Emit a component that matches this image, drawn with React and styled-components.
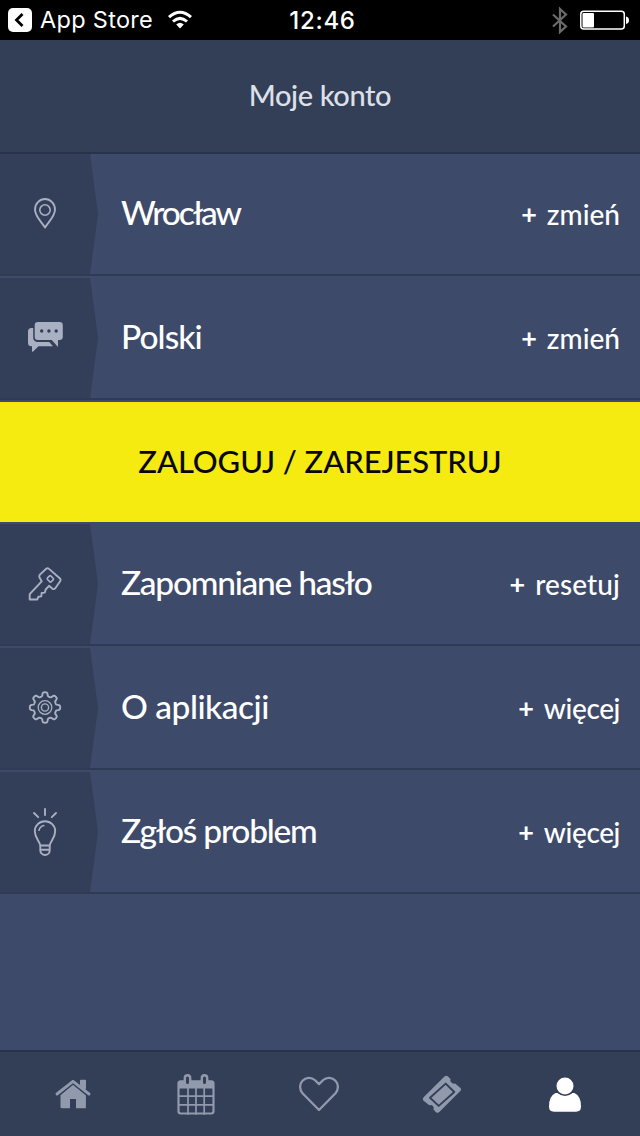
import React from "react";
import styled, { createGlobalStyle } from "styled-components";

const GlobalStyle = createGlobalStyle`
  * { box-sizing: border-box; }
  body { margin: 0; background: #3e4a69; }
`;

const Screen = styled.div`
  display: flex;
  flex-direction: column;
  width: 640px;
  height: 1136px;
  overflow: hidden;
  background: #3e4a69;
  color: #fff;
  font-family: Lato, "Liberation Sans", sans-serif;
  font-weight: 500;
`;

const StatusBar = styled.div`
  display: grid;
  grid-template-columns: 1fr auto 1fr;
  align-items: center;
  height: 40px;
  padding: 0 11px 0 8px;
  background: #000;
  font-family: Inter, "Liberation Sans", sans-serif;
  font-size: 23.5px;
  line-height: 40px;
`;

const StatusLeft = styled.div`
  display: flex;
  align-items: center;
  font-weight: 400;
  letter-spacing: 0.3px;
`;

const StatusName = styled.span`
  margin: 0 15px 0 8px;
`;

const StatusTime = styled.div`
  font-weight: 500;
  font-size: 24px;
  letter-spacing: 0.7px;
  margin-left: 8px;
  padding-top: 2px;
  line-height: 38px;
`;

const StatusRight = styled.div`
  display: flex;
  align-items: center;
  justify-content: flex-end;
  gap: 12px;
`;

const Header = styled.header`
  display: flex;
  align-items: center;
  justify-content: center;
  height: 114px;
  padding-bottom: 2px;
  border-bottom: 2px solid #28334b;
  background: #333e57;
  color: #dde0e8;
`;

const Label = styled.span`
  font-size: ${(p) => p.$size}px;
  font-weight: ${(p) => (p.$bold ? 700 : 500)};
  letter-spacing: ${(p) => p.$track || 0}px;
  line-height: 40px;
  white-space: nowrap;
`;

const Row = styled.div`
  display: flex;
  align-items: stretch;
  height: ${(p) => (p.$first ? 122 : 124)}px;
  padding-top: ${(p) => (p.$first ? 0 : 2)}px;
  border-bottom: 2px solid #2f3a55;
`;

const IconPanel = styled.div`
  display: flex;
  align-items: center;
  width: 98px;
  background: #333e59;
  color: #a9b0c2;
  clip-path: polygon(0 0, 90px 0, 98px 50%, 90px 100%, 0 100%);
  svg { display: block; }
`;

const RowBody = styled.div`
  flex: 1;
  display: flex;
  align-items: center;
  justify-content: space-between;
  padding: 0 20px 4px 23px;
`;

const Action = styled.div`
  display: flex;
  align-items: center;
  gap: 10px;
  padding-top: 3px;
`;

const LoginButton = styled.button`
  flex: none;
  height: 120px;
  margin-top: 2px;
  padding: 0 0 3px;
  border: 0;
  background: #f5eb11;
  color: #080800;
  font: inherit;
`;

const TabBar = styled.nav`
  display: grid;
  grid-template-columns: repeat(5, 123px);
  justify-content: center;
  height: 86px;
  margin-top: auto;
  padding-right: 2px;
  border-top: 2px solid #28334b;
  background: #333e57;
`;

const Tab = styled.a`
  display: flex;
  align-items: center;
  justify-content: center;
  color: ${(p) => (p.$active ? "#fff" : "#9199ad")};
  svg { display: block; }
`;

const Pic = ({ w = 90, h = 120, children }) => (
  <svg width={w} height={h} viewBox={`0 0 ${w} ${h}`} fill="none" stroke="currentColor"
    strokeWidth="1.9" strokeLinecap="round" strokeLinejoin="round">{children}</svg>
);

const PinIcon = () => (
  <Pic>
    <path d="M45 73.500C42 68.500 35 62.500 35 55.500a10 10.500 0 0 1 20 0C55 62.500 48 68.500 45 73.500Z" />
    <circle cx="45" cy="56" r="5.200" strokeWidth="1.600" />
  </Pic>
);

const ChatIcon = () => (
  <Pic>
    <path d="M38 44h21.500a3.300 3.300 0 0 1 3.300 3.300v11.500a3.300 3.300 0 0 1-3.300 3.300H58v6.800l-6.300-6.800H38a3.300 3.300 0 0 1-3.300-3.300V47.300a3.300 3.300 0 0 1 3.300-3.300Z" fill="currentColor" stroke="none" />
    <path d="M33.200 50H31.500a3.500 3.500 0 0 0-3.500 3.500v11.300a3.500 3.500 0 0 0 3.500 3.500h.5v4.500q0 1.500 1.200.7L38.500 68.300H53l-3.800-4.200H37.500a4.300 4.300 0 0 1-4.300-4.300Z" fill="currentColor" stroke="none" />
    <g fill="#333e59" stroke="none">
      <circle cx="41.700" cy="53" r="1.700" /><circle cx="48.900" cy="53" r="1.700" /><circle cx="56.200" cy="53" r="1.700" />
    </g>
  </Pic>
);

const KeyIcon = () => (
  <Pic>
    <path d="M46.500 44.500q1.300-.7 2.500.4L60 54.500q1.200 1.200.3 2.500l-5 7.200q-1.200 1.500-2.800.6l-3.500-3-3.300 3.700-.9 3.100-3.200.4-.3 3.400-3 .4-1 2.700H29.700v-5.300L41.700 57.300 39.500 53.600q-.8-1.600.4-3Z" />
    <rect x="47.600" y="52.400" width="5.400" height="4.900" rx="1.200" transform="rotate(45 50.300 54.900)" strokeWidth="1.600" />
  </Pic>
);

const gearPath = (() => {
  const steps = 160;
  const points = [];
  for (let i = 0; i < steps; i++) {
    const a = (i / steps) * Math.PI * 2;
    const r = 13.3 + 1.95 * Math.tanh(2.2 * Math.cos(8 * a));
    points.push(`${(45 + r * Math.sin(a)).toFixed(2)} ${(59.5 - r * Math.cos(a)).toFixed(2)}`);
  }
  return `M${points.join("L")}Z`;
})();

const GearIcon = () => (
  <Pic>
    <path d={gearPath} />
    <circle cx="45" cy="59.500" r="6.800" strokeWidth="1.300" />
    <circle cx="45" cy="59.500" r="3.600" strokeWidth="1.400" />
  </Pic>
);

const BulbIcon = () => (
  <Pic>
    <path d="M45 37v6M34 41l4.200 4.200M56 41l-4.200 4.200" />
    <path d="M40.300 73.500C39.800 69 34.800 66.500 34.800 59a10.200 9.800 0 0 1 20.400 0C55.200 66.500 50.200 69 49.700 73.500Z" />
    <path d="M40.300 74v4.500a4.700 4.500 0 0 0 9.400 0V74M40.500 77.700h9" />
    <path d="M39 58.300q.8-3.800 4.800-4.800" strokeWidth="1.600" />
  </Pic>
);

const HomeIcon = () => (
  <Pic w={40} h={40}>
    <g fill="currentColor" stroke="none">
      <path d="M7.500 21 20 10l12.900 11v13.200H23V25h-6v9.200H9q-1.500 0-1.500-1.500Z" />
      <path d="M27 6.700q0-1 1-1h4q1 0 1 1V15.500L27 10Z" />
    </g>
    <path d="M4 20.500 20 7.500l16 13" stroke="#333e57" strokeWidth="5.300" />
    <path d="M4 20 20 7.300 36 20" strokeWidth="2.900" />
    <path d="M28.300 7.200h3.400v7l-3.400-2.700Z" fill="currentColor" strokeWidth="2.400" />
  </Pic>
);

const CalendarIcon = () => (
  <Pic w={40} h={44}>
    <rect x="2.500" y="9.500" width="35" height="32" rx="2.200" strokeWidth="2.200" />
    <path d="M2 15V10.500q0-2 2-2h32q2 0 2 2v6H2Z" fill="currentColor" stroke="none" />
    <path d="M3 24.200h34M3 32.800h34M12 16v26M20 16v26M28.200 16v26" strokeWidth="1.700" />
    <rect x="8.800" y="3.300" width="5.400" height="10" rx="2.700" fill="#333e57" strokeWidth="2.400" />
    <rect x="25.800" y="3.300" width="5.400" height="10" rx="2.700" fill="#333e57" strokeWidth="2.400" />
  </Pic>
);

const HeartIcon = () => (
  <Pic w={42} h={40}>
    <path d="M21 36 4.500 19.200C1.300 15.500 1.300 10 4.500 6.700C7.800 3.100 13.300 2.800 16.800 6L21 10.100l4.200-4.100c3.500-3.200 9-2.900 12.300.7c3.200 3.300 3.200 8.800 0 12.500Z" strokeWidth="2.300" />
  </Pic>
);

const TicketIcon = () => (
  <Pic w={40} h={40}>
    <path d="M22.500 2.500q2-1.500 3.500 0l2.500 2.500q-.8 2 .8 3.600t3.800 1l5.400 4.300q1.400 1.400 0 2.800L17.300 38q-1.500 1.500-3.300.2l-2.500-2.600q.8-2-.6-3.500t-3.600-.9L1.300 26.500q-1.300-1.500.3-3.200Z" fill="currentColor" stroke="none" />
    <path d="M23.700 9.600 32.300 18 16.700 31.900 8 23.800Z" stroke="#333e57" strokeWidth="1.900" />
  </Pic>
);

const PersonIcon = () => (
  <Pic w={40} h={40}>
    <g fill="currentColor" stroke="none">
      <path d="M10.500 19Q4 22 4 32.500Q4 37.700 9 37.700H31Q36 37.700 36 32.500Q36 22 29.500 19Z" />
      <circle cx="20" cy="12.200" r="9.800" fill="#333e57" />
      <circle cx="20" cy="12" r="8.500" />
    </g>
  </Pic>
);

const WifiIcon = () => (
  <svg width="24" height="20" viewBox="0 0 24 20" fill="none" stroke="#fff" strokeWidth="3">
    <path d="M1 7.200Q12-2.800 23 7.200M5 11.500Q12 5.300 19 11.500" />
    <path d="M8.200 14.500Q12 11 15.800 14.500L12 18.500Z" fill="#fff" stroke="none" />
  </svg>
);

const BackIcon = () => (
  <svg width="24" height="24" viewBox="0 0 24 24" fill="none">
    <rect width="24" height="24" rx="5" fill="#fff" />
    <path d="M14.500 6 8.500 12l6 6" stroke="#000" strokeWidth="2.800" />
  </svg>
);

const BluetoothIcon = () => (
  <svg width="16" height="28" viewBox="0 0 16 28" fill="none" stroke="#6b6b6b" strokeWidth="2.200">
    <path d="m1 8.500 13 12-6 5.500v-23L14 8.500 1 20.500" />
  </svg>
);

const BatteryIcon = () => (
  <svg width="49" height="20" viewBox="0 0 49 20">
    <rect x=".8" y="1.300" width="43.500" height="17.800" rx="3" fill="none" stroke="#fff" strokeWidth="1.500" />
    <rect x="2.500" y="3" width="11.500" height="14.500" rx="1" fill="#fff" />
    <path d="M46 6.500q3 .5 3 3.700T46 14Z" fill="#fff" />
  </svg>
);

const MenuRow = ({ icon, label, track, action, actionTrack, first }) => (
  <Row $first={first}>
    <IconPanel>{icon}</IconPanel>
    <RowBody>
      <Label $size={33.5} $track={track}>{label}</Label>
      <Action>
        <Label $size={27} $bold>+</Label>
        <Label $size={28} $track={actionTrack}>{action}</Label>
      </Action>
    </RowBody>
  </Row>
);

export default function App() {
  return (
    <Screen>
      <GlobalStyle />
      <StatusBar>
        <StatusLeft><BackIcon /><StatusName>App Store</StatusName><WifiIcon /></StatusLeft>
        <StatusTime>12:46</StatusTime>
        <StatusRight><BluetoothIcon /><BatteryIcon /></StatusRight>
      </StatusBar>
      <Header><Label $size={29} $track={-0.4}>Moje konto</Label></Header>
      <MenuRow first icon={<PinIcon />} label="Wrocław" track={-2.1} action="zmień" />
      <MenuRow icon={<ChatIcon />} label="Polski" track={-0.95} action="zmień" />
      <LoginButton><Label $size={31} $track={-0.1}>ZALOGUJ / ZAREJESTRUJ</Label></LoginButton>
      <MenuRow icon={<KeyIcon />} label="Zapomniane hasło" track={-1.25} action="resetuj" actionTrack={0.1} />
      <MenuRow icon={<GearIcon />} label="O aplikacji" track={-0.5} action="więcej" actionTrack={-0.4} />
      <MenuRow icon={<BulbIcon />} label="Zgłoś problem" track={-1.25} action="więcej" actionTrack={-0.4} />
      <TabBar>
        <Tab><HomeIcon /></Tab>
        <Tab><CalendarIcon /></Tab>
        <Tab><HeartIcon /></Tab>
        <Tab><TicketIcon /></Tab>
        <Tab $active><PersonIcon /></Tab>
      </TabBar>
    </Screen>
  );
}
